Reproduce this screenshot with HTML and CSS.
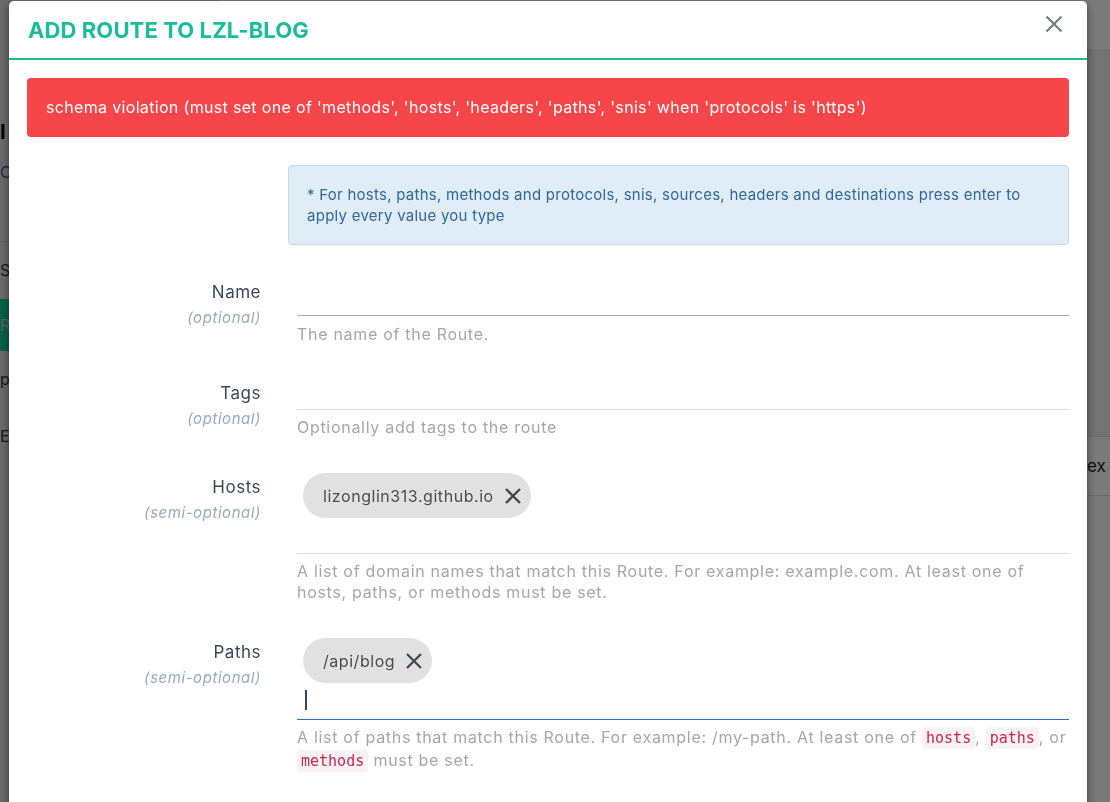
FILE: index.html
```html
<!DOCTYPE html>
<html lang="en">
<head>
<meta charset="utf-8">
<title>Add route</title>
<link rel="stylesheet" href="styles.css">
</head>
<body>
<div class="page">
  <aside class="sidebar">
    <div class="side-head">I</div>
    <div class="side-sub">Ce</div>
    <div class="side-item">Se</div>
    <div class="side-item active">Ro</div>
    <div class="side-item">p|</div>
    <div class="side-item">El</div>
  </aside>
  <main class="content">
    <div class="band band-top"></div>
    <div class="band band-mid"></div>
    <div class="table-row"><span class="spacer"></span><span class="cell">ex</span></div>
  </main>
</div>
<div class="backdrop"></div>
<div class="modal">
  <div class="modal-header">
    <h4 class="modal-title">ADD ROUTE TO LZL-BLOG</h4>
    <button class="close" type="button" aria-label="Close">
      <svg width="18" height="18" viewBox="0 0 18 18"><path d="M1.5 1.5 L16.5 16.5 M16.5 1.5 L1.5 16.5" stroke="#6b7b8a" stroke-width="2" fill="none"/></svg>
    </button>
  </div>
  <div class="modal-body">
    <div class="alert">schema violation (must set one of 'methods', 'hosts', 'headers', 'paths', 'snis' when 'protocols' is 'https')</div>

    <div class="form-row info-row">
      <div class="label-col"></div>
      <div class="info">* For hosts, paths, methods and protocols, snis, sources, headers and destinations press enter to apply every value you type</div>
    </div>

    <div class="form-row row-name">
      <div class="label-col">
        <div class="label-name">Name</div>
        <div class="label-opt">(optional)</div>
      </div>
      <div class="field">
        <div class="input input-text"></div>
        <div class="help">The name of the Route.</div>
      </div>
    </div>

    <div class="form-row row-tags">
      <div class="label-col">
        <div class="label-name">Tags</div>
        <div class="label-opt">(optional)</div>
      </div>
      <div class="field">
        <div class="input input-tags"></div>
        <div class="help">Optionally add tags to the route</div>
      </div>
    </div>

    <div class="form-row row-hosts">
      <div class="label-col">
        <div class="label-name">Hosts</div>
        <div class="label-opt">(semi-optional)</div>
      </div>
      <div class="field">
        <div class="input input-chips">
          <div class="chip"><span>lizonglin313.github.io</span>
            <svg class="chip-x" width="18" height="18" viewBox="0 0 18 18"><path d="M2 2 L16 16 M16 2 L2 16" stroke="#3d4a56" stroke-width="2.3" fill="none"/></svg>
          </div>
          <div class="chip-input"></div>
        </div>
        <div class="help">A list of domain names that match this Route. For example: example.com. At least one of hosts, paths, or methods must be set.</div>
      </div>
    </div>

    <div class="form-row row-paths">
      <div class="label-col">
        <div class="label-name">Paths</div>
        <div class="label-opt">(semi-optional)</div>
      </div>
      <div class="field">
        <div class="input input-chips focused">
          <div class="chip"><span>/api/blog</span>
            <svg class="chip-x" width="18" height="18" viewBox="0 0 18 18"><path d="M2 2 L16 16 M16 2 L2 16" stroke="#3d4a56" stroke-width="2.3" fill="none"/></svg>
          </div>
          <div class="chip-input"><span class="caret"></span></div>
        </div>
        <div class="help help-code">A list of paths that match this Route. For example: /my-path. At least one of <code>hosts</code>, <code>paths</code>, or <code>methods</code> must be set.</div>
      </div>
    </div>
  </div>
</div>
</body>
</html>
```
FILE: styles.css
```css
* { box-sizing: border-box; }
html, body { margin: 0; padding: 0; height: 100%; }
body {
  font-family: "Inter", "DejaVu Sans", sans-serif;
  background: #f2f2f2;
  overflow: hidden;
}
.page {
  display: flex;
  height: 802px;
}
.sidebar {
  width: 220px;
  background: #d6d6d6;
  font-size: 16px;
  color: #333;
  padding-top: 120px;
}
.side-head { font-weight: 700; font-size: 20px; color: #000; height: 30px; }
.side-sub { color: #2d5c8a; height: 92px; line-height: 44px; border-bottom: 1px solid #c8c8c8; }
.side-item { height: 57px; line-height: 57px; }
.side-item.active { background: #18c296; color: #9fd9c8; height: 52px; line-height: 52px; }
.content { flex: 1; display: flex; flex-direction: column; }
.band-top { height: 50px; background: #f6f6f6; border-bottom: 1px solid #e4e4e4; }
.band-mid { height: 386px; background: #e6e6e6; }
.table-row {
  display: flex;
  height: 60px;
  border-top: 1px solid #d4d4d4;
  border-bottom: 1px solid #d4d4d4;
  background: #f4f4f4;
  align-items: center;
}
.spacer { flex: 1; }
.cell { width: 23px; font-size: 17px; color: #222; overflow: hidden; }

.backdrop {
  position: fixed;
  inset: 0;
  background: rgba(0, 0, 0, 0.5);
}
.modal {
  position: absolute;
  left: 9px;
  top: 1px;
  width: 1078px;
  height: 900px;
  background: #fff;
  border-radius: 5px 5px 0 0;
  box-shadow: 0 3px 9px rgba(0, 0, 0, 0.5);
}
.modal-header {
  height: 59px;
  border-bottom: 2px solid #1abc9c;
  display: flex;
  align-items: center;
  justify-content: space-between;
  padding: 0 24px 0 19px;
}
.modal-title {
  margin: 0;
  font-size: 22px;
  font-weight: 700;
  color: #1abc9c;
  letter-spacing: 0.1px;
}
.close {
  border: 0;
  background: none;
  padding: 0;
  margin-top: -12px;
  width: 18px;
  height: 18px;
  display: block;
}
.close svg { display: block; }
.modal-body {
  padding: 18px 18px 0 18px;
}
.alert {
  background: #f7464a;
  color: #fff;
  border-radius: 4px;
  padding: 19px 19px;
  font-size: 16px;
  line-height: 21px;
  letter-spacing: 0.33px;
}
.form-row {
  display: grid;
  grid-template-columns: 261px 1fr;
}
.info-row { margin-top: 28px; }
.info {
  background: #e0edf7;
  border: 1px solid #bddcee;
  border-radius: 4px;
  color: #31679a;
  font-size: 15px;
  letter-spacing: 0.26px;
  line-height: 21px;
  padding: 18px 18px;
  height: 80px;
}
.label-col {
  text-align: right;
  padding-right: 27px;
}
.label-name {
  font-size: 17px;
  letter-spacing: 0.5px;
  line-height: 22px;
  color: #3a4856;
}
.label-opt {
  font-size: 15px;
  letter-spacing: 0.55px;
  line-height: 22px;
  margin-top: 4px;
  font-style: italic;
  color: #97abbd;
}
.field { padding-left: 9px; }
.help {
  font-size: 16px;
  letter-spacing: 0.7px;
  color: #a6a6a6;
  line-height: 20px;
  margin-top: 8px;
}
.row-name { margin-top: 36px; }
.row-tags { margin-top: 38px; }
.row-hosts { margin-top: 39px; }
.row-paths { margin-top: 38px; }

.input-text { height: 35px; border-bottom: 1px solid #a9a9a9; }
.input-tags { height: 28px; border-bottom: 1px solid #dcdcdc; }
.row-tags .help { margin-top: 7px; }
.input-chips { border-bottom: 1px solid #dcdcdc; }
.input-chips.focused { border-bottom-color: #2c6fbd; }
.chip {
  display: inline-flex;
  align-items: center;
  height: 45px;
  margin: -3px 0 0 6px;
  padding: 0 9px 0 20px;
  background: #e1e1e1;
  border-radius: 23px;
  font-size: 16px;
  letter-spacing: 0.55px;
  color: #4d4d4d;
  gap: 10px;
}
.chip-x { display: block; }
.chip-input { height: 35px; padding: 7px 0 0 8px; }
.focused .chip-input { height: 36px; }
.caret { display: block; width: 2px; height: 20px; background: #34495e; }
.row-hosts .help { line-height: 21px; margin-top: 7px; }
.help-code { line-height: 22px; margin-top: 6px; }
code {
  font-family: "DejaVu Sans Mono", monospace;
  font-size: 15px;
  letter-spacing: 0;
  color: #c7254e;
  background: #f9f2f4;
  border-radius: 4px;
  padding: 2px 4px;
}
```
